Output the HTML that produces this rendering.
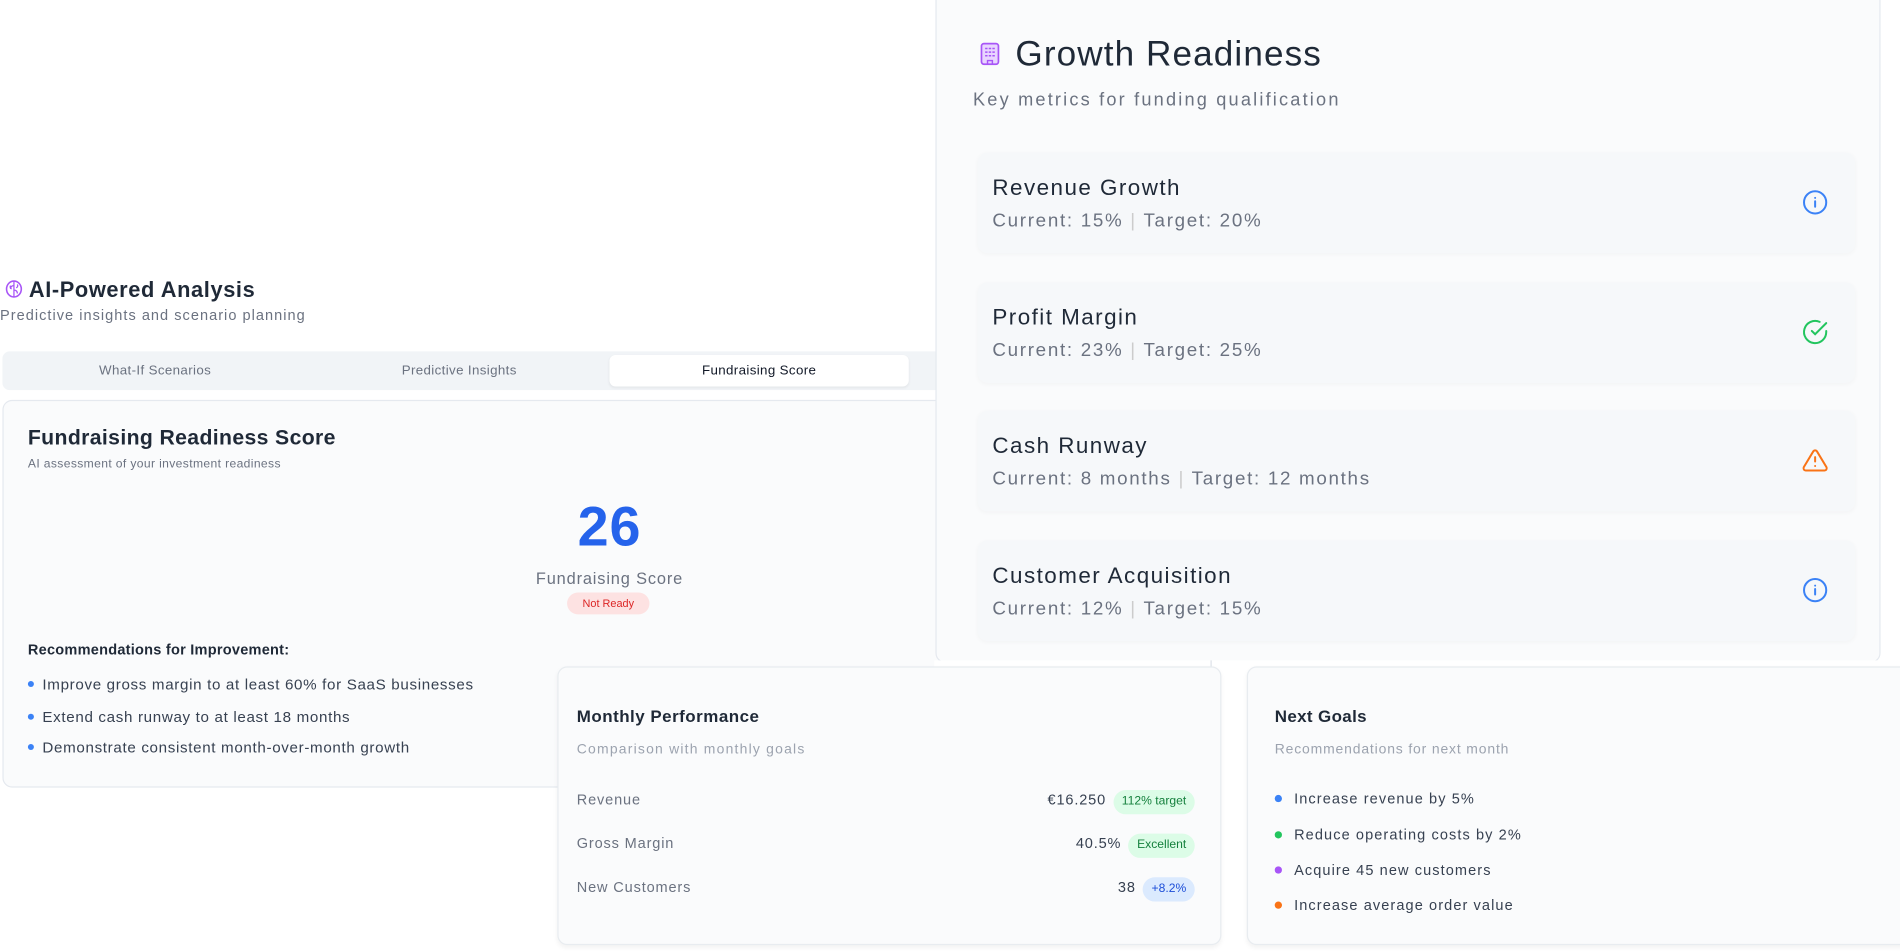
<!DOCTYPE html>
<html><head><meta charset="utf-8"><style>
html,body{margin:0;padding:0;background:#fff;width:1900px;height:949px;overflow:hidden;font-family:"Liberation Sans",sans-serif;color:#1f2937}
#c{position:absolute;left:0;top:0;width:1568px;height:783px;transform:scale(1.2117);transform-origin:0 0;letter-spacing:.7px}
.abs{position:absolute}
.card{position:absolute;background:#fafbfc;border:1px solid #e5e9ef;border-radius:8px}
.tab{position:absolute;top:0;height:32px;line-height:32px;font-size:11px;color:#6b7280;text-align:center;letter-spacing:.3px}
.li{font-size:12.5px;color:#374151;position:absolute;left:22px;letter-spacing:.55px}
.li:before{content:"";display:inline-block;width:5px;height:5px;border-radius:50%;background:#3b82f6;margin-right:7px;vertical-align:2px}
.row{position:absolute;left:34px;width:724px;height:83px;background:#f6f8fa;border-radius:8px;box-shadow:0 1px 4px rgba(0,0,0,.03)}
.row .t{position:absolute;left:12px;top:18px;font-size:18.5px;color:#1f2937;letter-spacing:1.2px}
.row .s{position:absolute;left:12px;top:48px;font-size:15.5px;color:#6b7280;letter-spacing:1.4px}
.row svg{position:absolute;right:22px;top:30px}
.pr{position:absolute;left:15px;width:510px;font-size:12px;color:#6b7280;height:22px;line-height:22px}
.pr .v{position:absolute;right:0;top:0;color:#374151}
.b{display:inline-block;padding:0 7px;border-radius:10px;font-size:10px;margin-left:6px;line-height:20px;letter-spacing:0}
.g{font-size:12px;color:#374151;position:absolute;left:22px;letter-spacing:.9px}
.g i{display:inline-block;width:6px;height:6px;border-radius:50%;margin-right:10px;vertical-align:1px}
</style></head><body><div id="c">

<div class="abs" style="left:4px;top:229px;font-size:18px;font-weight:bold;color:#1f2937;letter-spacing:.5px">
<svg width="15" height="15" viewBox="0 0 16 16" style="vertical-align:-1px"><ellipse cx="8" cy="8" rx="6.5" ry="7" fill="none" stroke="#a855f7" stroke-width="1.4"/><path d="M8 1v14M8 5c-2 0-3 1-3 3M8 9c2 0 3 1 3 3M5 5q-1 2 1 3M11 4q1 2-1 3" fill="none" stroke="#a855f7" stroke-width="1.1"/></svg> AI-Powered Analysis</div>
<div class="abs" style="left:0;top:253px;font-size:12px;color:#6b7280;letter-spacing:.85px">Predictive insights and scenario planning</div>

<div class="abs" style="left:2px;top:290px;width:780px;height:32px;background:#f1f4f7;border-radius:6px">
<div class="tab" style="left:0;width:252px">What-If Scenarios</div>
<div class="tab" style="left:252px;width:250px">Predictive Insights</div>
<div class="tab" style="left:501px;top:3px;width:247px;height:26px;line-height:26px;background:#fff;border-radius:5px;color:#111827;box-shadow:0 1px 2px rgba(0,0,0,.06)">Fundraising Score</div>
</div>

<div class="card" style="left:2px;top:330px;width:790px;height:318px">
<div class="abs" style="left:20px;top:20px;font-size:17.5px;font-weight:bold;color:#1f2937;letter-spacing:.3px">Fundraising Readiness Score</div>
<div class="abs" style="left:20px;top:47px;font-size:10px;color:#6b7280;letter-spacing:.3px">AI assessment of your investment readiness</div>
<div class="abs" style="left:400px;width:200px;top:76px;text-align:center;font-size:46px;font-weight:bold;color:#2563eb">26</div>
<div class="abs" style="left:400px;width:200px;top:139px;text-align:center;font-size:13.5px;color:#6b7280">Fundraising Score</div>
<div class="abs" style="left:465px;top:158px;width:68px;height:18px;line-height:18px;border-radius:9px;background:#fde2e2;color:#dc2626;font-size:9px;text-align:center;letter-spacing:0">Not Ready</div>
<div class="abs" style="left:20px;top:198px;font-size:12px;font-weight:bold;color:#1f2937;letter-spacing:.2px">Recommendations for Improvement:</div>
<div class="li" style="top:227px;left:20px">Improve gross margin to at least 60% for SaaS businesses</div>
<div class="li" style="top:254px;left:20px">Extend cash runway to at least 18 months</div>
<div class="li" style="top:279px;left:20px">Demonstrate consistent month-over-month growth</div>
</div>

<div class="card" style="left:772px;top:-10px;width:778px;height:555px;background:#fafbfc">
<svg class="abs" style="left:36px;top:44px" width="16" height="19" viewBox="0 0 16 19"><rect x="1" y="1" width="14" height="17" rx="2" fill="#e9d5ff" stroke="#a855f7" stroke-width="1.4"/><path d="M4 5h2M7 5h2M10 5h2M4 8h2M7 8h2M10 8h2M4 11h2M7 11h2M10 11h2M6 18v-3h4v3" stroke="#a855f7" stroke-width="1.2" fill="none"/></svg>
<div class="abs" style="left:65px;top:38px;font-size:29px;color:#1f2937;font-weight:500;letter-spacing:.9px">Growth Readiness</div>
<div class="abs" style="left:30px;top:83px;font-size:15px;color:#6b7280;letter-spacing:1.8px">Key metrics for funding qualification</div>
<div class="row" style="top:135px"><div class="t">Revenue Growth</div><div class="s">Current: 15% <span style="color:#ccc">|</span> Target: 20%</div>
<svg width="22" height="22" viewBox="0 0 24 24" fill="none" stroke="#3b82f6" stroke-width="1.8" stroke-linecap="round"><circle cx="12" cy="12" r="10"/><path d="M12 16v-5M12 8h.01"/></svg></div>
<div class="row" style="top:242px"><div class="t">Profit Margin</div><div class="s">Current: 23% <span style="color:#ccc">|</span> Target: 25%</div>
<svg width="22" height="22" viewBox="0 0 24 24" fill="none" stroke="#22c55e" stroke-width="1.8" stroke-linecap="round"><path d="M22 11.1V12a10 10 0 1 1-5.9-9.1"/><path d="M22 4L12 14l-3-3"/></svg></div>
<div class="row" style="top:348px"><div class="t">Cash Runway</div><div class="s">Current: 8 months <span style="color:#ccc">|</span> Target: 12 months</div>
<svg width="22" height="22" viewBox="0 0 24 24" fill="none" stroke="#f97316" stroke-width="1.8" stroke-linecap="round" stroke-linejoin="round"><path d="M10.3 3.9L1.8 18a2 2 0 0 0 1.7 3h17a2 2 0 0 0 1.7-3L13.7 3.9a2 2 0 0 0-3.4 0z"/><path d="M12 9v4M12 17h.01"/></svg></div>
<div class="row" style="top:455px"><div class="t">Customer Acquisition</div><div class="s">Current: 12% <span style="color:#ccc">|</span> Target: 15%</div>
<svg width="22" height="22" viewBox="0 0 24 24" fill="none" stroke="#3b82f6" stroke-width="1.8" stroke-linecap="round"><circle cx="12" cy="12" r="10"/><path d="M12 16v-5M12 8h.01"/></svg></div>
</div>

<div class="abs" style="left:771px;top:545px;width:797px;height:240px;background:#fff"></div>
<div class="abs" style="left:999px;top:545px;width:1px;height:22px;background:#dde2e8"></div>

<div class="card" style="left:460px;top:550px;width:546px;height:228px;border-color:#e8ecf0;box-shadow:0 2px 4px rgba(0,0,0,.05)">
<div class="abs" style="left:15px;top:32px;font-size:14px;font-weight:bold;color:#1f2937;letter-spacing:.4px">Monthly Performance</div>
<div class="abs" style="left:15px;top:62px;font-size:11.5px;color:#9ca3af;letter-spacing:1px">Comparison with monthly goals</div>
<div class="pr" style="top:98px">Revenue<span class="v">€16.250<span class="b" style="background:#dcfce7;color:#15803d">112% target</span></span></div>
<div class="pr" style="top:134px">Gross Margin<span class="v">40.5%<span class="b" style="background:#dcfce7;color:#15803d">Excellent</span></span></div>
<div class="pr" style="top:170px">New Customers<span class="v">38<span class="b" style="background:#dbeafe;color:#1d4ed8">+8.2%</span></span></div>
</div>

<div class="card" style="left:1029px;top:550px;width:545px;height:228px;border-color:#e8ecf0;box-shadow:0 2px 4px rgba(0,0,0,.05)">
<div class="abs" style="left:22px;top:32px;font-size:14px;font-weight:bold;color:#1f2937;letter-spacing:.3px">Next Goals</div>
<div class="abs" style="left:22px;top:62px;font-size:11.5px;color:#9ca3af;letter-spacing:.7px">Recommendations for next month</div>
<div class="g" style="top:101px"><i style="background:#3b82f6"></i>Increase revenue by 5%</div>
<div class="g" style="top:131px"><i style="background:#22c55e"></i>Reduce operating costs by 2%</div>
<div class="g" style="top:160px"><i style="background:#a855f7"></i>Acquire 45 new customers</div>
<div class="g" style="top:189px"><i style="background:#f97316"></i>Increase average order value</div>
</div>

</div></body></html>
